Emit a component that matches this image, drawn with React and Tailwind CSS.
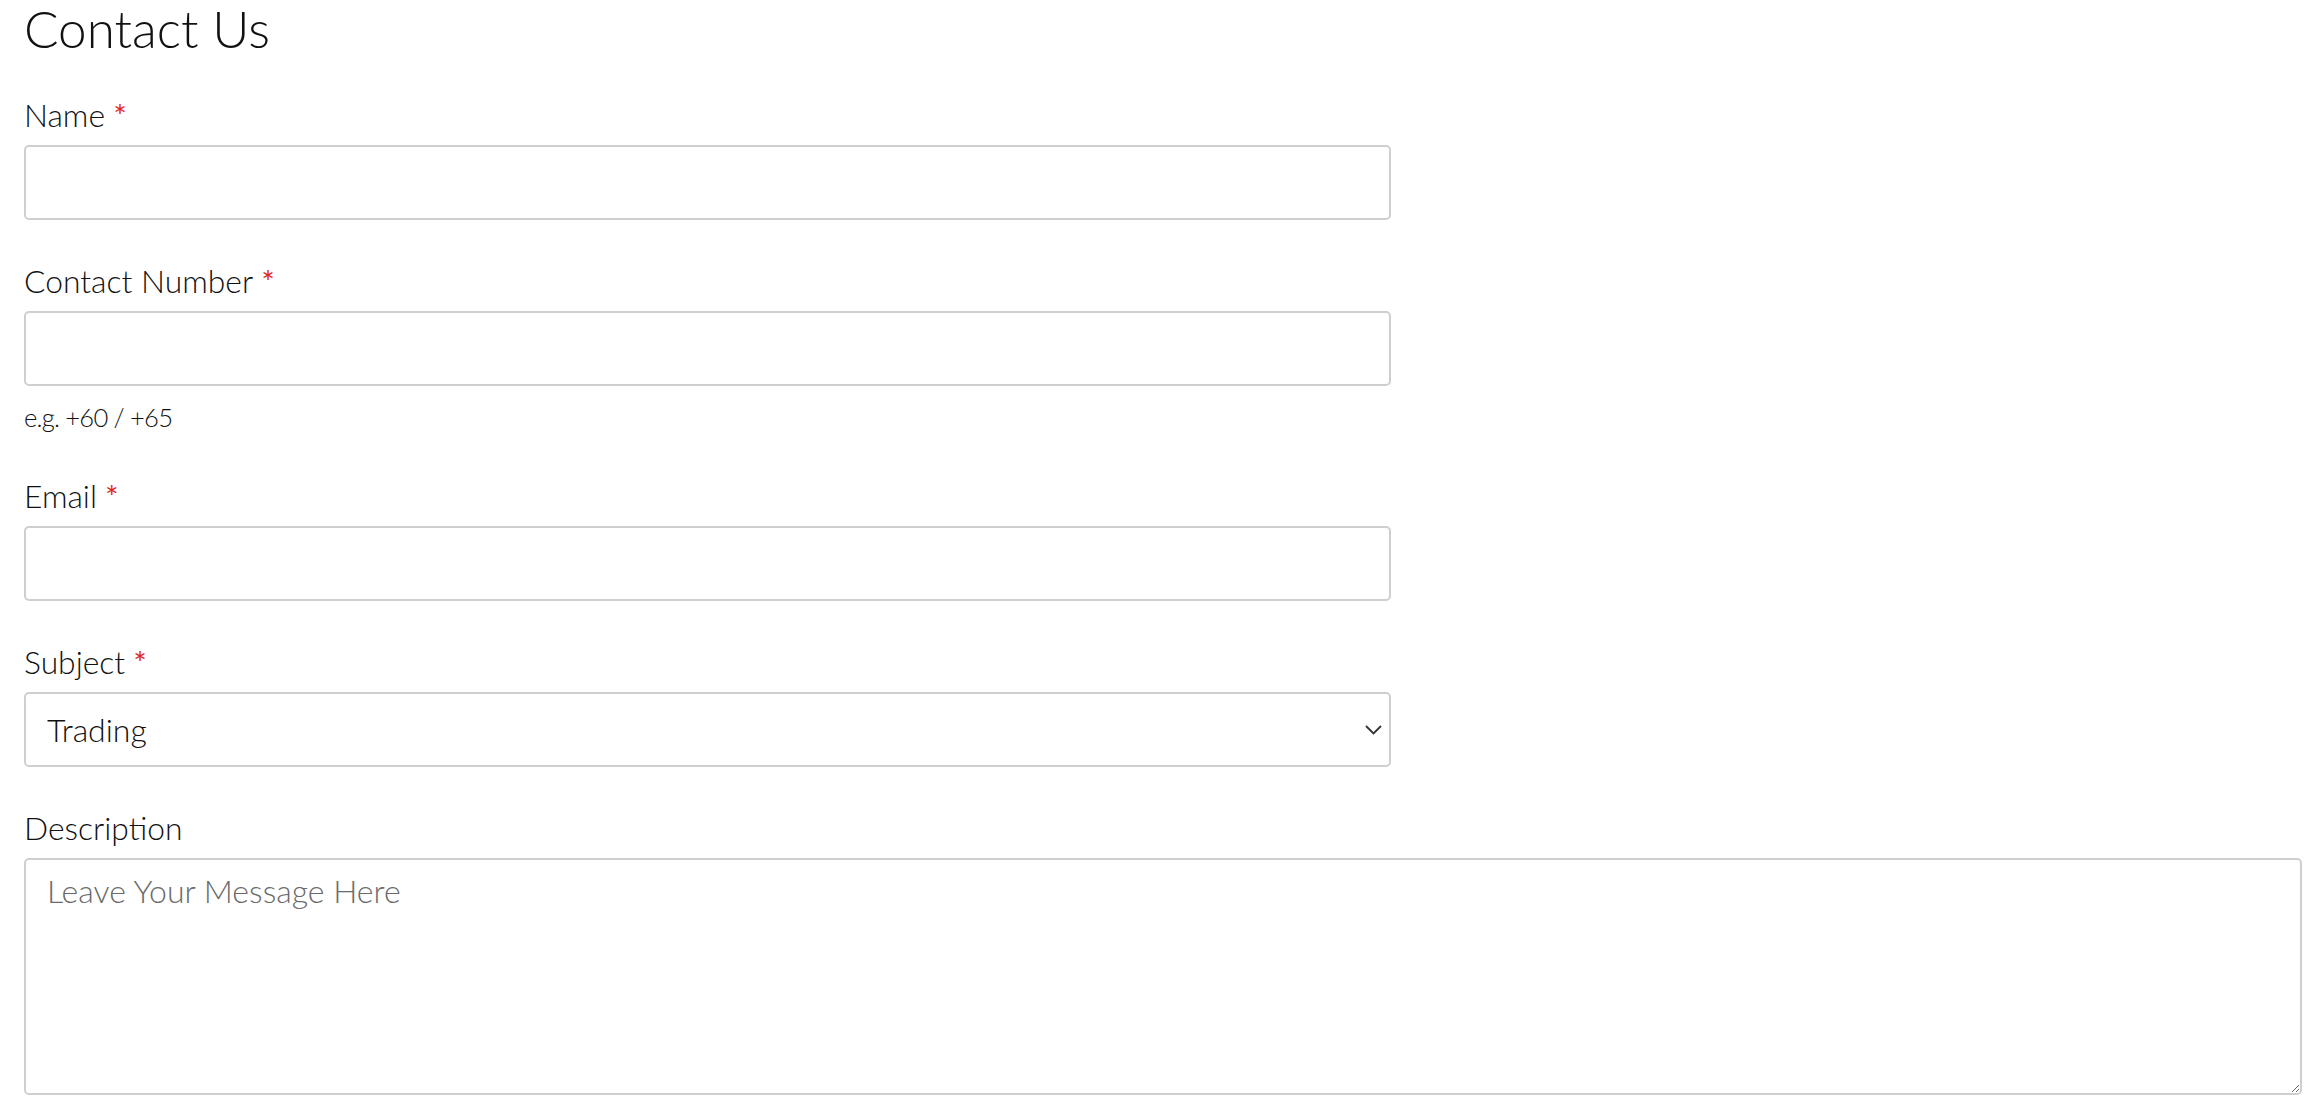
import React from "react";

const Label = ({ children, required }) => (
  <label className="block text-[31.8px] leading-[43px] mb-[8px] text-[#111] font-light">
    {children}
    {required && <span className="text-[#e0261b] font-normal"> *</span>}
  </label>
);

const inputCls =
  "block w-[60%] h-[75px] border-2 border-[#cfcfcf] rounded-[5px] px-[21px] text-[32px] font-light text-[#111] bg-white outline-none";

export default function App() {
  return (
    <div className="min-h-screen bg-white font-['Lato','Liberation_Sans',sans-serif] text-[#222] pl-[24px] w-[2302px]">
      {/* Heading */}
      <h1 className="text-[51.2px] leading-[56px] font-light mb-[38px] text-[#111]">Contact Us</h1>

      <form>
        <div className="mb-[40px]">
          <Label required>Name</Label>
          <input type="text" className={inputCls} />
        </div>

        <div className="mb-[39px]">
          <Label required>Contact Number</Label>
          <input type="text" className={inputCls} />
          <p className="mt-[12px] text-[25.6px] leading-[38px] tracking-[-0.8px] font-light text-[#111]">e.g. +60 / +65</p>
        </div>

        <div className="mb-[40px]">
          <Label required>Email</Label>
          <input type="email" className={inputCls} />
        </div>

        <div className="mb-[40px]">
          <Label required>Subject</Label>
          <div className="relative w-[60%]">
            <select className={inputCls + " w-full appearance-none"} defaultValue="Trading">
              <option>Trading</option>
              <option>General Enquiry</option>
              <option>Support</option>
            </select>
            <svg
              className="absolute right-[9px] top-1/2 -translate-y-1/2 pointer-events-none"
              width="17"
              height="10"
              viewBox="0 0 17 10"
              fill="none"
            >
              <path d="M1 1l7.5 7.5L16 1" stroke="#333" strokeWidth="1.8" />
            </svg>
          </div>
        </div>

        <div>
          <Label>Description</Label>
          <textarea
            placeholder="Leave Your Message Here"
            className="block w-full h-[237px] border-2 border-[#cfcfcf] rounded-[5px] px-[21px] pt-[7px] text-[32px] leading-[48px] font-light text-[#111] placeholder:text-[#6a6a6a] outline-none resize-y"
          />
        </div>
      </form>
    </div>
  );
}
